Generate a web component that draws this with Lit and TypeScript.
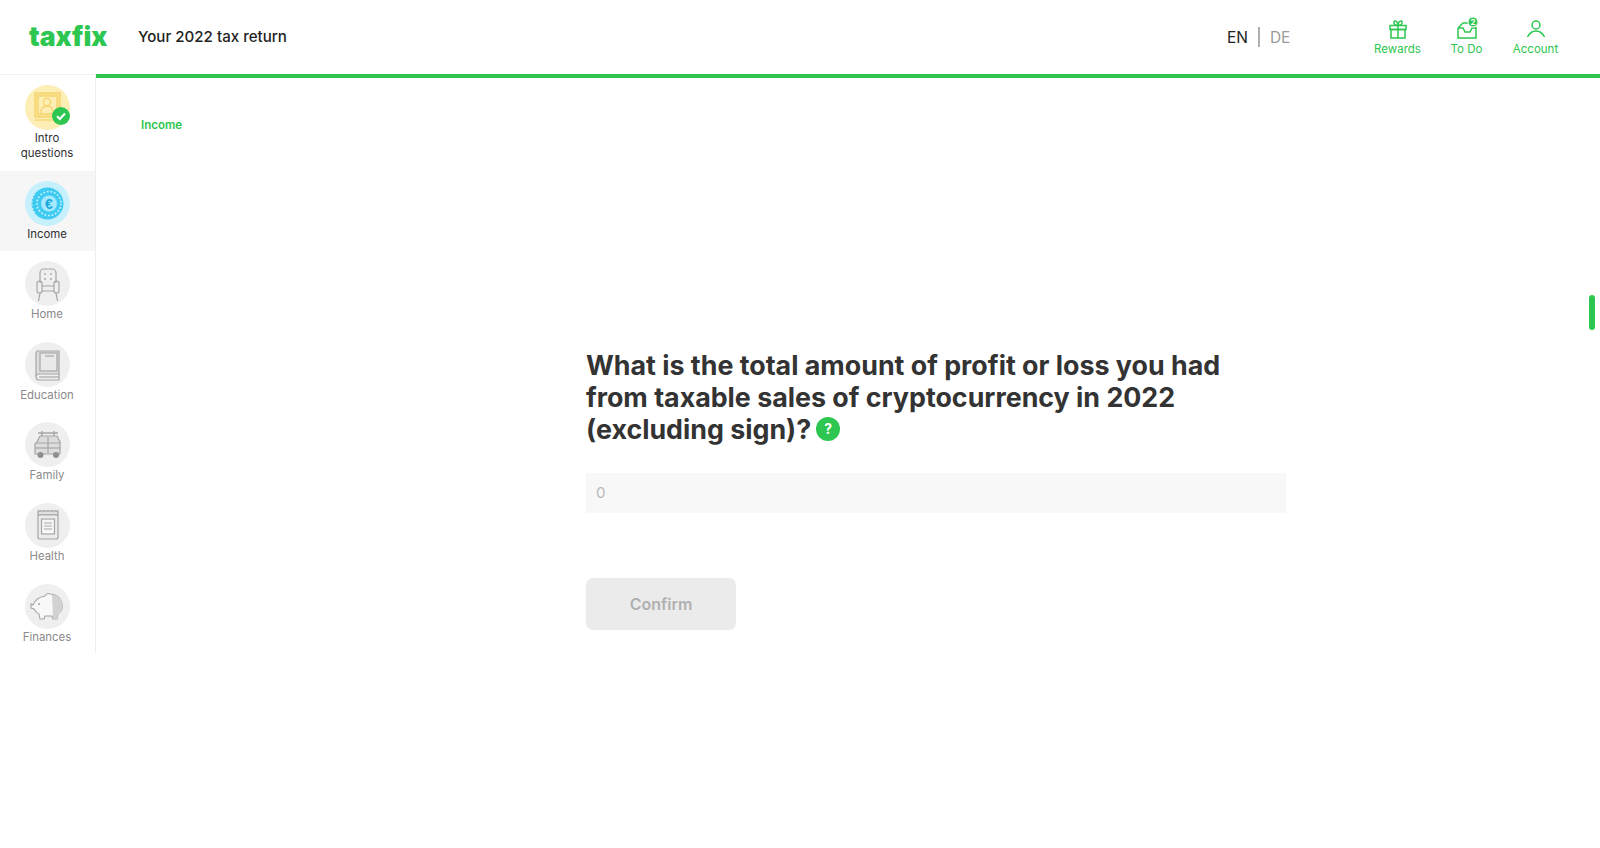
import { LitElement, html, css, svg } from "lit";
import { customElement } from "lit/decorators.js";

const G = "#a6a6a6";
const ICONS: Record<string, unknown> = {
  intro: svg`<g fill="none" stroke="#f6d56f" stroke-width="1.4"><rect x="10" y="8" width="25" height="24" fill="#fbe08c"/><rect x="13" y="11" width="19" height="18" fill="#fdeeb5"/><circle cx="22" cy="17" r="3.6"/><path d="M16 28c0-5 3-7 6-7s6 2 6 7"/><path d="M10 35h20"/></g>`,
  income: svg`<circle cx="22.5" cy="22.5" r="16" fill="#3fcaf2"/><circle cx="24" cy="22.5" r="12" fill="none" stroke="#c9f3ff" stroke-width="1.6" stroke-dasharray="1.800 1.800"/><circle cx="24" cy="22.5" r="8" fill="#a6e9fc"/><text x="24" y="27.500" text-anchor="middle" font-family="Liberation Sans, sans-serif" font-size="14" font-weight="700" fill="#18a8dc">€</text><path d="M9.500 13c-3.500 6-3.500 13 0 19" fill="none" stroke="#c9f3ff" stroke-width="1.4" stroke-dasharray="1.800 1.800"/>`,
  home: svg`<g fill="none" stroke="${G}" stroke-width="1.2"><path d="M15 22V12a4 4 0 0 1 4-4h8a4 4 0 0 1 4 4v10"/><rect x="12" y="20" width="5" height="12" rx="2.2"/><rect x="29" y="20" width="5" height="12" rx="2.2"/><path d="M17 25h12M17 30h12"/><path d="M15 32l-1.500 8M31 32l1.500 8"/></g><g fill="${G}"><circle cx="20" cy="13" r=".9"/><circle cx="26" cy="13" r=".9"/><circle cx="20" cy="18" r=".9"/><circle cx="26" cy="18" r=".9"/></g>`,
  education: svg`<g fill="none" stroke="${G}" stroke-width="1.2"><path d="M12 9h22v23H14a3 3 0 0 0-3 3V11z" fill="#dedede"/><rect x="15" y="11" width="17" height="18" fill="#e9e9e9"/><path d="M11 35a3 3 0 0 0 3 3h20v-6"/><path d="M14 35h20"/><path d="M20 14h9"/></g>`,
  family: svg`<g fill="none" stroke="${G}" stroke-width="1.2"><path d="M13 11h20M17 9v5M29 9v5" stroke-width="1.500"/><path d="M12 20l3-6h17l3 6v12H10V22z" fill="#dcdcdc"/><path d="M11 21h25M23 15v16"/><path d="M10 26h26"/></g><circle cx="15.500" cy="33" r="3" fill="#8f8f8f"/><circle cx="31" cy="33" r="3" fill="#8f8f8f"/>`,
  health: svg`<g fill="none" stroke="${G}" stroke-width="1.2"><rect x="13" y="8" width="20" height="4" fill="#dedede"/><path d="M15 8V7M19 8V7M23 8V7M27 8V7M31 8V7"/><rect x="13" y="12" width="20" height="24" rx="2" fill="#ededed"/><rect x="16.500" y="16" width="13" height="15" fill="#f7f7f7"/><path d="M19 20h8M19 23h8M19 26h8"/></g>`,
  finances: svg`<path d="M8 21c2-5 6-8 12-9 1-2 3-3 5-2 5 0 11 3 12 10 1 4-1 8-4 10l-1 5h-4l-1-3h-7l-1 3h-4l-1-5c-2-1-4-3-5-5l-3-1v-4z" fill="#f8f8f8" stroke="${G}" stroke-width="1.1"/><path d="M27 10.500c5 .5 10 4 10.500 10 .5 4-1 8-4.500 10l-1 5h-4V33l-1-22z" fill="#d2d2d2"/><circle cx="14" cy="20" r="1" fill="${G}"/>`,
};

const NAV = [
  { id: "intro", lines: ["Intro", "questions"], tint: "done" },
  { id: "income", lines: ["Income"], tint: "active" },
  { id: "home", lines: ["Home"], tint: "" },
  { id: "education", lines: ["Education"], tint: "" },
  { id: "family", lines: ["Family"], tint: "" },
  { id: "health", lines: ["Health"], tint: "" },
  { id: "finances", lines: ["Finances"], tint: "" },
];

@customElement("app-root")
export class AppRoot extends LitElement {
  static styles = css`
    :host {
      display: block;
      position: relative;
      width: 1600px;
      height: 848px;
      overflow: hidden;
      background: #fff;
      font-family: "Inter", sans-serif;
      color: #333;
    }
    .header {
      height: 74px;
      display: flex;
      align-items: center;
      box-sizing: border-box;
      padding-left: 29px;
    }
    .logo {
      width: 109px;
      font-size: 26.500px;
      font-weight: 900;
      color: #2dc650;
      line-height: 1;
      margin-top: -2px;
    }
    .title {
      font-size: 15.100px;
      font-weight: 500;
      color: #222;
      margin-top: -1px;
    }
    .langs {
      margin-left: 940px;
      display: flex;
      align-items: center;
      font-size: 15.500px;
      color: #222;
    }
    .langs .sep {
      width: 2px;
      height: 20px;
      background: #b0b0b0;
      margin: 0 10px;
    }
    .langs .off {
      color: #9a9a9a;
    }
    .tools {
      position: absolute;
      top: 18px;
      left: 1363px;
      display: flex;
    }
    .tool {
      display: flex;
      flex-direction: column;
      align-items: center;
      width: 69px;
      color: #2dc650;
      font-size: 11.500px;
      line-height: 16px;
    }
    .tool svg {
      display: block;
      width: 22px;
      height: 22px;
      margin-bottom: 1px;
      overflow: visible;
    }
    .body {
      display: flex;
      align-items: flex-start;
    }
    .side {
      width: 96px;
      height: 579px;
      box-sizing: border-box;
      border-right: 1px solid #eeeeee;
      border-top: 1px solid #f0f0f0;
      flex: none;
    }
    .item {
      display: flex;
      flex-direction: column;
      align-items: center;
      padding: 10px 1px 9.600px 0;
      font-size: 11.400px;
      line-height: 15px;
      color: #8a8a8a;
      text-align: center;
    }
    .item.done {
      color: #2f2f2f;
    }
    .item.active {
      color: #2f2f2f;
      background: #f6f6f6;
    }
    .circle {
      position: relative;
      width: 45px;
      height: 45px;
      margin-bottom: 1px;
      border-radius: 50%;
      background: #efefef;
    }
    .done .circle { background: #fdeeb5; }
    .active .circle { background: #c5f0fc; }
    .circle svg {
      display: block;
      width: 45px;
      height: 45px;
    }
    .circle svg.badge {
      position: absolute;
      right: 0;
      bottom: 5px;
      width: 18px;
      height: 18px;
    }
    .main {
      flex: 1;
      border-top: 4px solid #2dc650;
      padding: 39px 0 0 45px;
      box-sizing: border-box;
    }
    .crumb {
      font-size: 11.500px;
      font-weight: 600;
      color: #2dc650;
      line-height: 16px;
    }
    .q {
      margin: 216px 0 0 445px;
      width: 700px;
    }
    h1 {
      margin: 0;
      max-width: 650px;
      font-size: 26.800px;
      font-weight: 700;
      line-height: 32px;
      color: #333;
    }
    .help {
      display: inline-flex;
      align-items: center;
      justify-content: center;
      width: 24px;
      height: 24px;
      margin-left: 5px;
      border-radius: 50%;
      background: #2dc650;
      color: #fff;
      font-size: 14px;
      font-weight: 700;
      vertical-align: 5.500px;
    }
    .field {
      margin-top: 28px;
      height: 40px;
      box-sizing: border-box;
      background: #f8f8f8;
      padding: 0 0 2px 10px;
      display: flex;
      align-items: center;
      font-size: 15px;
      color: #b9b9b9;
    }
    .confirm {
      display: flex;
      align-items: center;
      justify-content: center;
      margin-top: 65px;
      width: 150px;
      height: 52px;
      border-radius: 7px;
      background: #ebebeb;
      color: #b0b0b0;
      font-size: 16px;
      font-weight: 600;
    }
    .thumb {
      position: absolute;
      left: 1589px;
      top: 295px;
      width: 6px;
      height: 35px;
      border-radius: 3px;
      background: #2dc650;
    }
  `;

  render() {
    return html`
      <div class="header">
        <div class="logo">taxfix</div>
        <div class="title">Your 2022 tax return</div>
        <div class="langs"><span>EN</span><span class="sep"></span><span class="off">DE</span></div>
      </div>
      <div class="tools">
        <div class="tool">
          <svg viewBox="0 0 22 22" fill="none" stroke="#2dc650" stroke-width="1.500">
            <rect x="3" y="7.500" width="16" height="4"/><rect x="4" y="11.500" width="14" height="8.500"/>
            <path d="M11 7.500V20M11 7.500C8 7.500 6.500 6 7 4s3.500-1.500 4 3.500zM11 7.500c3 0 4.500-1.500 4-3.500s-3.500-1.500-4 3.500z"/>
          </svg>
          Rewards
        </div>
        <div class="tool">
          <svg viewBox="0 0 22 22" fill="none" stroke="#2dc650" stroke-width="1.500">
            <path d="M2 10l5-5h7M2 10v10h18V9"/><path d="M2 10h5l2 4h5l2-4h4"/>
            <circle cx="17" cy="4" r="5" fill="#2dc650" stroke="#fff" stroke-width="1"/>
            <text x="17" y="6.900" text-anchor="middle" font-size="8" font-weight="700" fill="#fff" stroke="none" font-family="Inter, sans-serif">2</text>
          </svg>
          To Do
        </div>
        <div class="tool">
          <svg viewBox="0 0 22 22" fill="none" stroke="#2dc650" stroke-width="1.500">
            <circle cx="11" cy="7" r="4"/><path d="M2.500 19c2-4 5-6 8.500-6s6.500 2 8.500 6"/>
          </svg>
          Account
        </div>
      </div>
      <div class="body">
        <nav class="side">
          ${NAV.map(
            (n) => html`
              <div class="item ${n.tint}">
                <div class="circle">
                  <svg viewBox="0 0 45 45">${ICONS[n.id]}</svg>
                  ${n.id === "intro"
                    ? html`<svg class="badge" viewBox="0 0 18 18">
                        <circle cx="9" cy="9" r="9" fill="#2dc650" />
                        <path d="M5 9.200l2.800 2.800L13 6.500" fill="none" stroke="#fff" stroke-width="2" />
                      </svg>`
                    : ""}
                </div>
                ${n.lines.map((l) => html`<div>${l}</div>`)}
              </div>
            `
          )}
        </nav>
        <main class="main">
          <div class="crumb">Income</div>
          <div class="q">
            <h1>
              What is the total amount of profit or loss you had from taxable sales of cryptocurrency in 2022
              (excluding sign)?<span class="help">?</span>
            </h1>
            <div class="field">0</div>
            <div class="confirm">Confirm</div>
          </div>
        </main>
      </div>
      <div class="thumb"></div>
    `;
  }
}
